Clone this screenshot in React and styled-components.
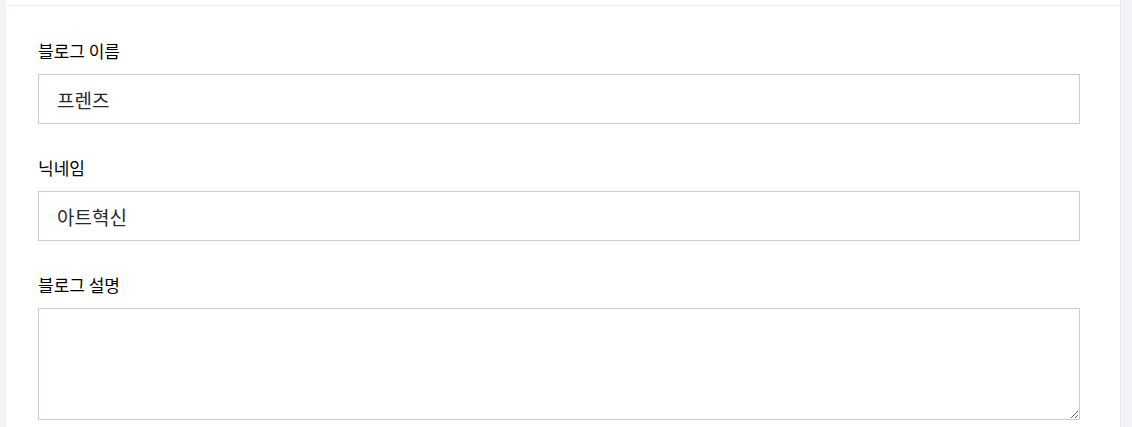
import React from "react";
import styled, { createGlobalStyle } from "styled-components";

const GlobalStyle = createGlobalStyle`
  html, body {
    margin: 0;
    padding: 0;
    background-color: #f2f3f7;
    font-family: "Noto Sans CJK KR", "Noto Sans", sans-serif;
  }
`;

const Page = styled.div`
  display: flex;
  height: 427px;
  overflow: hidden;
  padding-left: 6px;
`;

const Panel = styled.div`
  width: 1115px;
  background-color: white;
  border-right: 1px solid #e8e9ee;
  box-sizing: border-box;
`;

const TopBar = styled.div`
  height: 5px;
  border-bottom: 1px solid #eeeff3;
`;

const Form = styled.div`
  padding: 34px 40px 0 32px;
`;

const Field = styled.div`
  display: flex;
  flex-direction: column;
  margin-bottom: 33px;
`;

const Label = styled.label`
  font-size: 17px;
  line-height: 22px;
  color: #000;
  margin-bottom: 12px;
`;

const Input = styled.input`
  height: 50px;
  box-sizing: border-box;
  border: 1px solid #cbcbd6;
  padding: 0 18px;
  font-family: inherit;
  font-size: 19px;
  color: #2a2a2a;
  outline: none;
`;

const TextArea = styled.textarea`
  height: 112px;
  box-sizing: border-box;
  border: 1px solid #cbcbd6;
  padding: 12px 18px;
  font-family: inherit;
  font-size: 19px;
  color: #2a2a2a;
  outline: none;
  resize: vertical;
`;

const App = () => {
  return (
    <Page>
      <GlobalStyle />
      <Panel>
        <TopBar />
        <Form>
          <Field>
            <Label>블로그 이름</Label>
            <Input defaultValue="프렌즈" />
          </Field>
          <Field>
            <Label>닉네임</Label>
            <Input defaultValue="아트혁신" />
          </Field>
          <Field>
            <Label>블로그 설명</Label>
            <TextArea />
          </Field>
        </Form>
      </Panel>
    </Page>
  );
};

export default App;
